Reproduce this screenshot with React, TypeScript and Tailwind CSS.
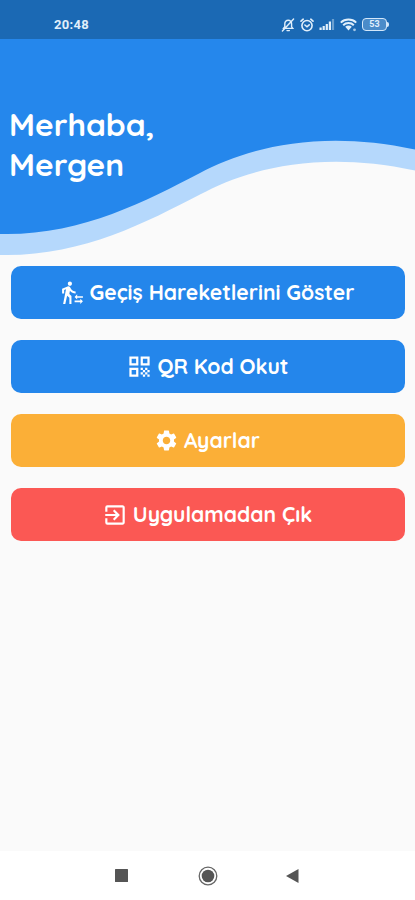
import type { ReactNode } from "react";
import {
  MdExitToApp,
  MdQrCode,
  MdSettings,
  MdTransferWithinAStation,
} from "react-icons/md";

export default function App() {
  return (
    <div className="flex h-[900px] w-[415px] flex-col overflow-hidden bg-[#fafafa] font-['Quicksand','Lato',sans-serif]">
      <StatusBar />
      <Header />

      <main className="flex flex-1 flex-col gap-[21px] pt-[10px] pr-[10px] pl-[11px]">
        <MenuButton
          color="bg-[#2486eb]"
          icon={<MdTransferWithinAStation className="size-[25px]" />}
          label="Geçiş Hareketlerini Göster"
        />
        <MenuButton
          color="bg-[#2486eb]"
          icon={<MdQrCode className="size-[27px]" />}
          label="QR Kod Okut"
        />
        <MenuButton
          color="bg-[#fbaf37]"
          icon={<MdSettings className="size-[25px]" />}
          label="Ayarlar"
        />
        <MenuButton
          color="bg-[#fb5854]"
          icon={<MdExitToApp className="size-[26px]" />}
          label="Uygulamadan Çık"
        />
      </main>

      <NavBar />
    </div>
  );
}

function StatusBar() {
  return (
    <div className="flex h-[39px] shrink-0 items-center justify-between bg-[#1b69b4] pt-[10px] pr-[26px] pl-[54px] text-[#e1effb]">
      <span className="font-['Roboto',sans-serif] text-[13px] leading-none font-bold tracking-[0.3px]">20:48</span>
      <div className="flex items-center">
        <BellOffIcon />
        <AlarmIcon />
        <SignalIcon />
        <WifiIcon />
        <div className="ml-[5px] flex items-center">
          <div className="flex h-[13px] w-[25px] items-center justify-center rounded-[4px] border-[1.5px] border-[#d3e7fa] bg-[#4a8bc9] font-['Roboto',sans-serif] text-[9px] leading-none font-bold">
            53
          </div>
          <div className="h-[5px] w-[2px] rounded-r-full bg-[#d3e7fa]" />
        </div>
      </div>
    </div>
  );
}

function Header() {
  return (
    <header className="relative h-[217px] shrink-0">
      <svg className="absolute inset-0" width="415" height="217" viewBox="0 39 415 217">
        <path fill="#b5d8fc" d="M0 39H415V170.5C320 150 248 168.5 200 194.5C145 223 80 257 0 255Z" />
        <path fill="#2587ec" d="M0 39H415V149.5C320 129 248 147.5 200 173C145 201.5 80 236 0 234Z" />
      </svg>
      <h1 className="relative pt-[65px] pl-[9px] text-[31.7px] leading-10 font-bold text-white">
        <span className="block">Merhaba,</span>
        <span className="block">Mergen</span>
      </h1>
    </header>
  );
}

interface MenuButtonProps {
  color: string;
  icon: ReactNode;
  label: string;
}

function MenuButton({ color, icon, label }: MenuButtonProps) {
  return (
    <button
      className={`flex h-[53px] w-full items-center justify-center gap-[5px] rounded-[10px] pr-[2px] text-white ${color}`}
    >
      {icon}
      <span className="pt-px text-[21.1px] leading-none font-bold whitespace-nowrap">{label}</span>
    </button>
  );
}

function NavBar() {
  return (
    <nav className="flex h-[49px] shrink-0 items-center bg-white pl-[115px]">
      <svg width="13" height="13" viewBox="0 0 13 13" fill="#555">
        <rect width="13" height="13" rx="0.5" />
      </svg>
      <svg className="ml-[70px]" width="20" height="20" viewBox="0 0 20 20">
        <circle cx="10" cy="10" r="8.8" fill="none" stroke="#666" strokeWidth="1.3" />
        <circle cx="10" cy="10" r="6.3" fill="#555" />
      </svg>
      <svg className="ml-[68px]" width="13" height="14" viewBox="0 0 13 14" fill="#555">
        <path d="M0 7 12.5 0V14Z" />
      </svg>
    </nav>
  );
}

// ---------- status icons ----------

function BellOffIcon() {
  return (
    <svg width="14" height="14" viewBox="0 0 14 14" fill="none" stroke="currentColor" strokeWidth="1.4" strokeLinecap="round">
      <path d="M2.2 10.4H11.8L10.6 8.8V5.8C10.6 3.6 9.2 2.3 7.2 2.3S3.8 3.6 3.8 5.8V8.8L2.4 10.4M6 12.6H8.4M12.6 1 1.4 13" />
    </svg>
  );
}

function AlarmIcon() {
  return (
    <svg className="ml-[5px]" width="14" height="14" viewBox="0 0 14 14" fill="none" stroke="currentColor" strokeWidth="1.6" strokeLinecap="round">
      <circle cx="7" cy="7.6" r="5.1" />
      <path d="M1 3.2 3.2 1.2M13 3.2 10.8 1.2M4.9 7 7 8.8 9.2 6.8" />
    </svg>
  );
}

function SignalIcon() {
  return (
    <svg className="ml-[5px]" width="16" height="13" viewBox="0 0 16 13" fill="currentColor">
      <rect x="0.5" y="9.5" width="2.2" height="2.5" />
      <rect x="3.6" y="8" width="2.2" height="4" />
      <rect x="6.7" y="6" width="2.2" height="6" />
      <rect x="9.8" y="3.5" width="2.2" height="8.5" />
      <rect x="12.9" y="1" width="2.2" height="11" opacity="0.4" />
    </svg>
  );
}

function WifiIcon() {
  return (
    <svg className="ml-[5px]" width="17" height="14" viewBox="0 0 17 14" fill="none" stroke="currentColor" strokeWidth="2">
      <path d="M0.8 4.6C5 0.6 12 0.6 16.2 4.6M3.2 7.2C6 4.4 11 4.4 13.8 7.2" />
      <path d="M5.2 8.8C7 7.2 10 7.2 11.8 8.8L8.5 12.5Z" fill="currentColor" stroke="none" />
      <circle cx="14.5" cy="11.8" r="1.4" fill="currentColor" stroke="none" opacity="0.7" />
    </svg>
  );
}
